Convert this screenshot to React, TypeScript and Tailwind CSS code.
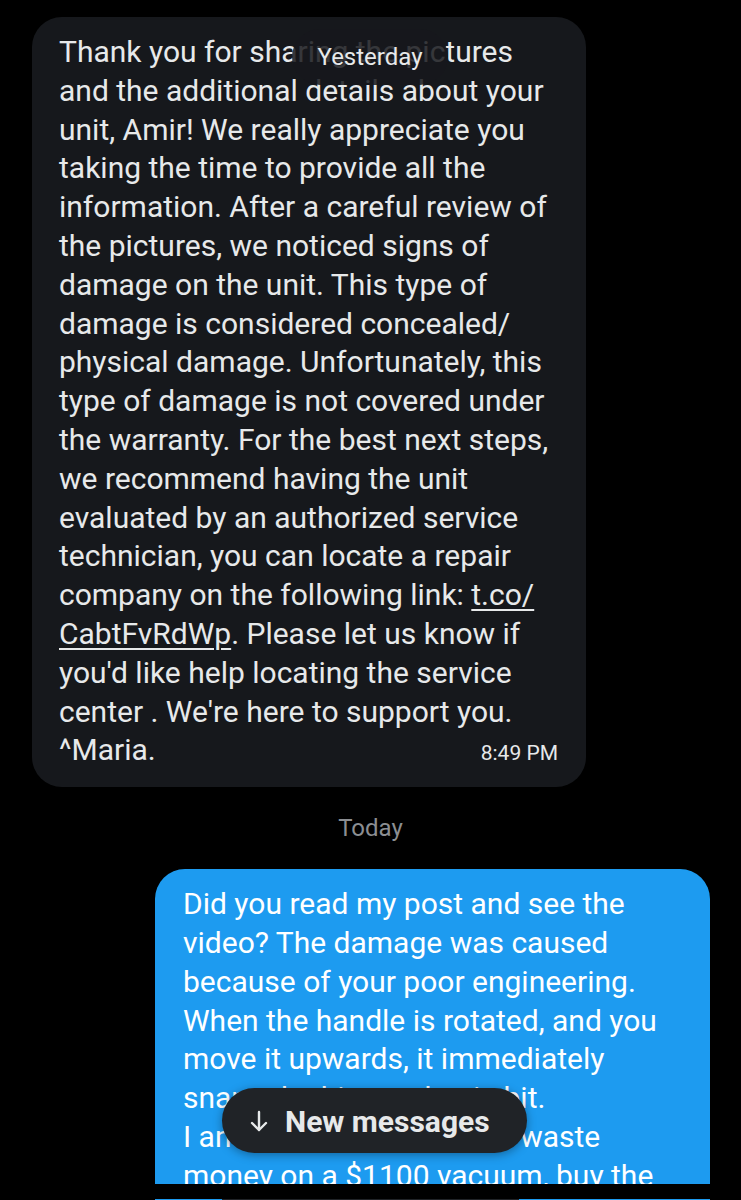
import React from "react";

const grayLines = [
  "Thank you for sharing the pictures",
  "and the additional details about your",
  "unit, Amir! We really appreciate you",
  "taking the time to provide all the",
  "information. After a careful review of",
  "the pictures, we noticed signs of",
  "damage on the unit. This type of",
  "damage is considered concealed/",
  "physical damage. Unfortunately, this",
  "type of damage is not covered under",
  "the warranty. For the best next steps,",
  "we recommend having the unit",
  "evaluated by an authorized service",
  "technician, you can locate a repair",
];

const blueLines = [
  "Did you read my post and see the",
  "video? The damage was caused",
  "because of your poor engineering.",
  "When the handle is rotated, and you",
  "move it upwards, it immediately",
  "snaps the hinge, plastic bit.",
  "I am not going to have to waste",
  "money on a $1100 vacuum, buy the",
];

function ArrowDownIcon() {
  return (
    <svg width="18" height="22" viewBox="0 0 18 22" fill="none" stroke="#e7e9ea" strokeWidth="2.4" strokeLinecap="round" strokeLinejoin="round">
      <path d="M9 2v18" />
      <path d="M2 13l7 7 7-7" />
    </svg>
  );
}

export default function App() {
  return (
    <div className="relative w-[741px] h-[1200px] overflow-hidden bg-black font-[Roboto,sans-serif]">
      {/* Yesterday bubble */}
      <div className="mt-[17px] ml-[32px] w-[554px] rounded-[30px] bg-[#16181c] pl-[27px] pr-[28px] pt-[16px] pb-[14px] text-[30px] leading-[38.8px] text-[#e7e9ea]">
        {grayLines.map((l, i) => (
          <div key={i} className="whitespace-nowrap">{l}</div>
        ))}
        <div className="whitespace-nowrap">
          company on the following link: <span className="underline underline-offset-[4px] decoration-[2px]">t.co/</span>
        </div>
        <div className="whitespace-nowrap">
          <span className="underline underline-offset-[4px] decoration-[2px]">CabtFvRdWp</span>. Please let us know if
        </div>
        <div className="whitespace-nowrap">you'd like help locating the service</div>
        <div className="whitespace-nowrap">center . We're here to support you.</div>
        <div className="flex items-baseline justify-between whitespace-nowrap">
          <span>^Maria.</span>
          <span className="text-[21px] text-[#e7e9ea]">8:49 PM</span>
        </div>
      </div>

      {/* Yesterday sticky label */}
      <div className="absolute left-[292px] top-[29px] flex h-[56px] w-[156px] items-center justify-center rounded-full bg-[#16181c]/85 text-[24px] leading-[28px] text-[#e7e9ea]">
        Yesterday
      </div>

      {/* Today */}
      <div className="mt-[27px] text-center text-[24px] leading-[28px] text-[#8b8e92]">Today</div>

      {/* Blue bubble */}
      <div className="mt-[27px] ml-[155px] h-[315px] w-[555px] overflow-hidden rounded-t-[30px] bg-[#1d9bf0] px-[28px] pt-[16px] text-[30px] leading-[38.8px] text-white">
        {blueLines.map((l, i) => (
          <div key={i} className="whitespace-nowrap">{l}</div>
        ))}
      </div>

      {/* stitched fragment at bottom */}
      <div className="relative mt-[15px] ml-[155px] h-[10px] w-[555px] bg-[#1d9bf0]">
        <div className="absolute left-[67px] top-0 h-[10px] w-[297px] bg-[#202327]">
          <div className="ml-[40px] mt-[1px] flex gap-[6px]">
            <div className="h-[3px] w-[14px] bg-[#e7e9ea]/70" />
            <div className="h-[3px] w-[60px] bg-[#e7e9ea]/70" />
            <div className="h-[3px] w-[140px] bg-[#e7e9ea]/70" />
          </div>
        </div>
      </div>

      {/* New messages pill */}
      <div className="absolute left-[222px] top-[1088px] flex h-[65px] w-[305px] items-center gap-[17px] rounded-full bg-[#202327] pl-[28px] shadow-[0_2px_10px_rgba(0,0,0,0.35)]">
        <ArrowDownIcon />
        <span className="pt-[3px] text-[30px] font-bold leading-none text-[#e7e9ea]">New messages</span>
      </div>
    </div>
  );
}
